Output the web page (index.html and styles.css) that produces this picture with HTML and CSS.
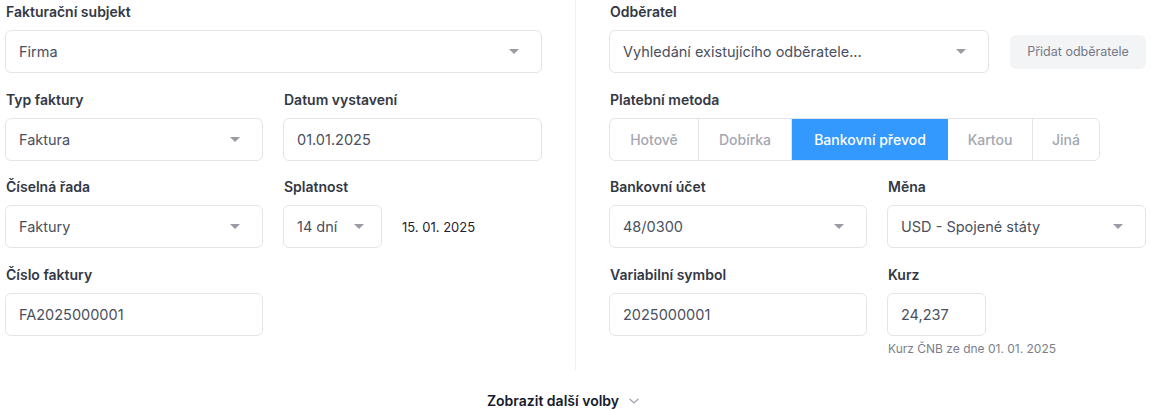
FILE: index.html
```html
<!DOCTYPE html>
<html lang="cs">
<head>
<meta charset="utf-8">
<link rel="stylesheet" href="styles.css">
</head>
<body>
<div class="page">
  <div class="cols">
    <div class="col">
      <div class="field">
        <div class="label">Fakturační subjekt</div>
        <div class="input select"><span>Firma</span><span class="caret"></span></div>
      </div>
      <div class="grid2">
        <div class="field">
          <div class="label">Typ faktury</div>
          <div class="input select"><span>Faktura</span><span class="caret"></span></div>
        </div>
        <div class="field">
          <div class="label">Datum vystavení</div>
          <div class="input"><span>01.01.2025</span></div>
        </div>
        <div class="field">
          <div class="label">Číselná řada</div>
          <div class="input select"><span>Faktury</span><span class="caret"></span></div>
        </div>
        <div class="field">
          <div class="label">Splatnost</div>
          <div class="inline">
            <div class="input select small"><span>14 dní</span><span class="caret"></span></div>
            <span class="due">15. 01. 2025</span>
          </div>
        </div>
        <div class="field">
          <div class="label">Číslo faktury</div>
          <div class="input"><span>FA2025000001</span></div>
        </div>
      </div>
    </div>
    <div class="divider"></div>
    <div class="col">
      <div class="field">
        <div class="label">Odběratel</div>
        <div class="inline wide">
          <div class="input select grow"><span>Vyhledání existujícího odběratele...</span><span class="caret"></span></div>
          <button class="add">Přidat odběratele</button>
        </div>
      </div>
      <div class="field">
        <div class="label">Platební metoda</div>
        <div class="segments">
          <span class="seg s1">Hotově</span>
          <span class="seg s2">Dobírka</span>
          <span class="seg s3 active">Bankovní převod</span>
          <span class="seg s4">Kartou</span>
          <span class="seg s5">Jiná</span>
        </div>
      </div>
      <div class="grid2">
        <div class="field">
          <div class="label">Bankovní účet</div>
          <div class="input select"><span>48/0300</span><span class="caret"></span></div>
        </div>
        <div class="field">
          <div class="label">Měna</div>
          <div class="input select"><span>USD - Spojené státy</span><span class="caret"></span></div>
        </div>
        <div class="field">
          <div class="label">Variabilní symbol</div>
          <div class="input"><span>2025000001</span></div>
        </div>
        <div class="field">
          <div class="label">Kurz</div>
          <div class="input small"><span>24,237</span></div>
          <div class="hint">Kurz ČNB ze dne 01. 01. 2025</div>
        </div>
      </div>
    </div>
  </div>
  <div class="more">
    <span>Zobrazit další volby</span>
    <svg width="12" height="8" viewBox="0 0 12 8"><path d="M1.5 1.8 L6 6 L10.5 1.8" fill="none" stroke="#9ca3af" stroke-width="1.2"/></svg>
  </div>
</div>
</body>
</html>
```
FILE: styles.css
```css
* { box-sizing: border-box; }
html, body { margin: 0; background: #fff; }
body {
  font-family: Inter, "Noto Sans", "Liberation Sans", sans-serif;
  color: #374151;
  width: 1151px;
  height: 410px;
  overflow: hidden;
}
.page { padding: 2px 5px 0 5px; }
.cols {
  display: grid;
  grid-template-columns: 537px 1px 537px;
  column-gap: 33px;
  height: 370px;
  margin-top: -2px;
  padding-top: 2px;
}
.divider { background: #eef0f3; margin-top: -2px; }
.col { display: flex; flex-direction: column; gap: 16.5px; }
.grid2 {
  display: grid;
  grid-template-columns: 258px 258px;
  column-gap: 21px;
  row-gap: 16.5px;
}
.col .grid2 { grid-template-columns: 258px 259px; column-gap: 20px; }
.field { display: flex; flex-direction: column; }
.label {
  font-size: 14px;
  line-height: 20px;
  font-weight: 600;
  color: #333845;
  margin-bottom: 8px;
  padding-left: 1px;
}
.input {
  height: 43px;
  border: 1px solid #e3e5ea;
  border-radius: 6px;
  display: flex;
  align-items: center;
  justify-content: space-between;
  padding: 0 22px 0 13px;
  font-size: 14.5px;
  color: #4a5060;
  background: #fff;
}
.input.small { width: 99px; }
.input.select.small { padding-right: 17px; }
.caret {
  width: 0; height: 0;
  border-left: 5.5px solid transparent;
  border-right: 5.5px solid transparent;
  border-top: 5.5px solid #9a9ca3;
}
.inline { display: flex; align-items: center; gap: 20px; }
.due { font-size: 13px; color: #1f2330; }
.wide { gap: 21px; }
.grow { flex: 1; }
.add {
  width: 136px;
  height: 34px;
  border: 0;
  border-radius: 6px;
  background: #f3f4f6;
  color: #747a86;
  font-family: inherit;
  font-size: 12.5px;
  padding: 0;
}
.segments {
  display: flex;
  width: 491px;
  height: 43px;
  border: 1px solid #e3e5ea;
  border-radius: 6px;
  overflow: hidden;
}
.seg {
  display: flex;
  align-items: center;
  justify-content: center;
  font-size: 14px;
  font-weight: 500;
  color: #a3a7b2;
  border-right: 1px solid #e3e5ea;
}
.seg:last-child { border-right: 0; }
.s1 { width: 89px; }
.s2 { width: 93px; }
.s3 { width: 156px; border-right: 0; }
.s4 { width: 85px; }
.s5 { flex: 1; }
.seg.active { background: #3399ff; color: #fff; }
.hint { font-size: 12px; color: #7a7f8b; margin-top: 5px; padding-left: 1px; }
.more {
  display: flex;
  align-items: center;
  justify-content: center;
  gap: 9px;
  margin-top: 22px;
  padding-right: 24px;
  font-size: 14px;
  font-weight: 600;
  color: #151a2d;
}
```
